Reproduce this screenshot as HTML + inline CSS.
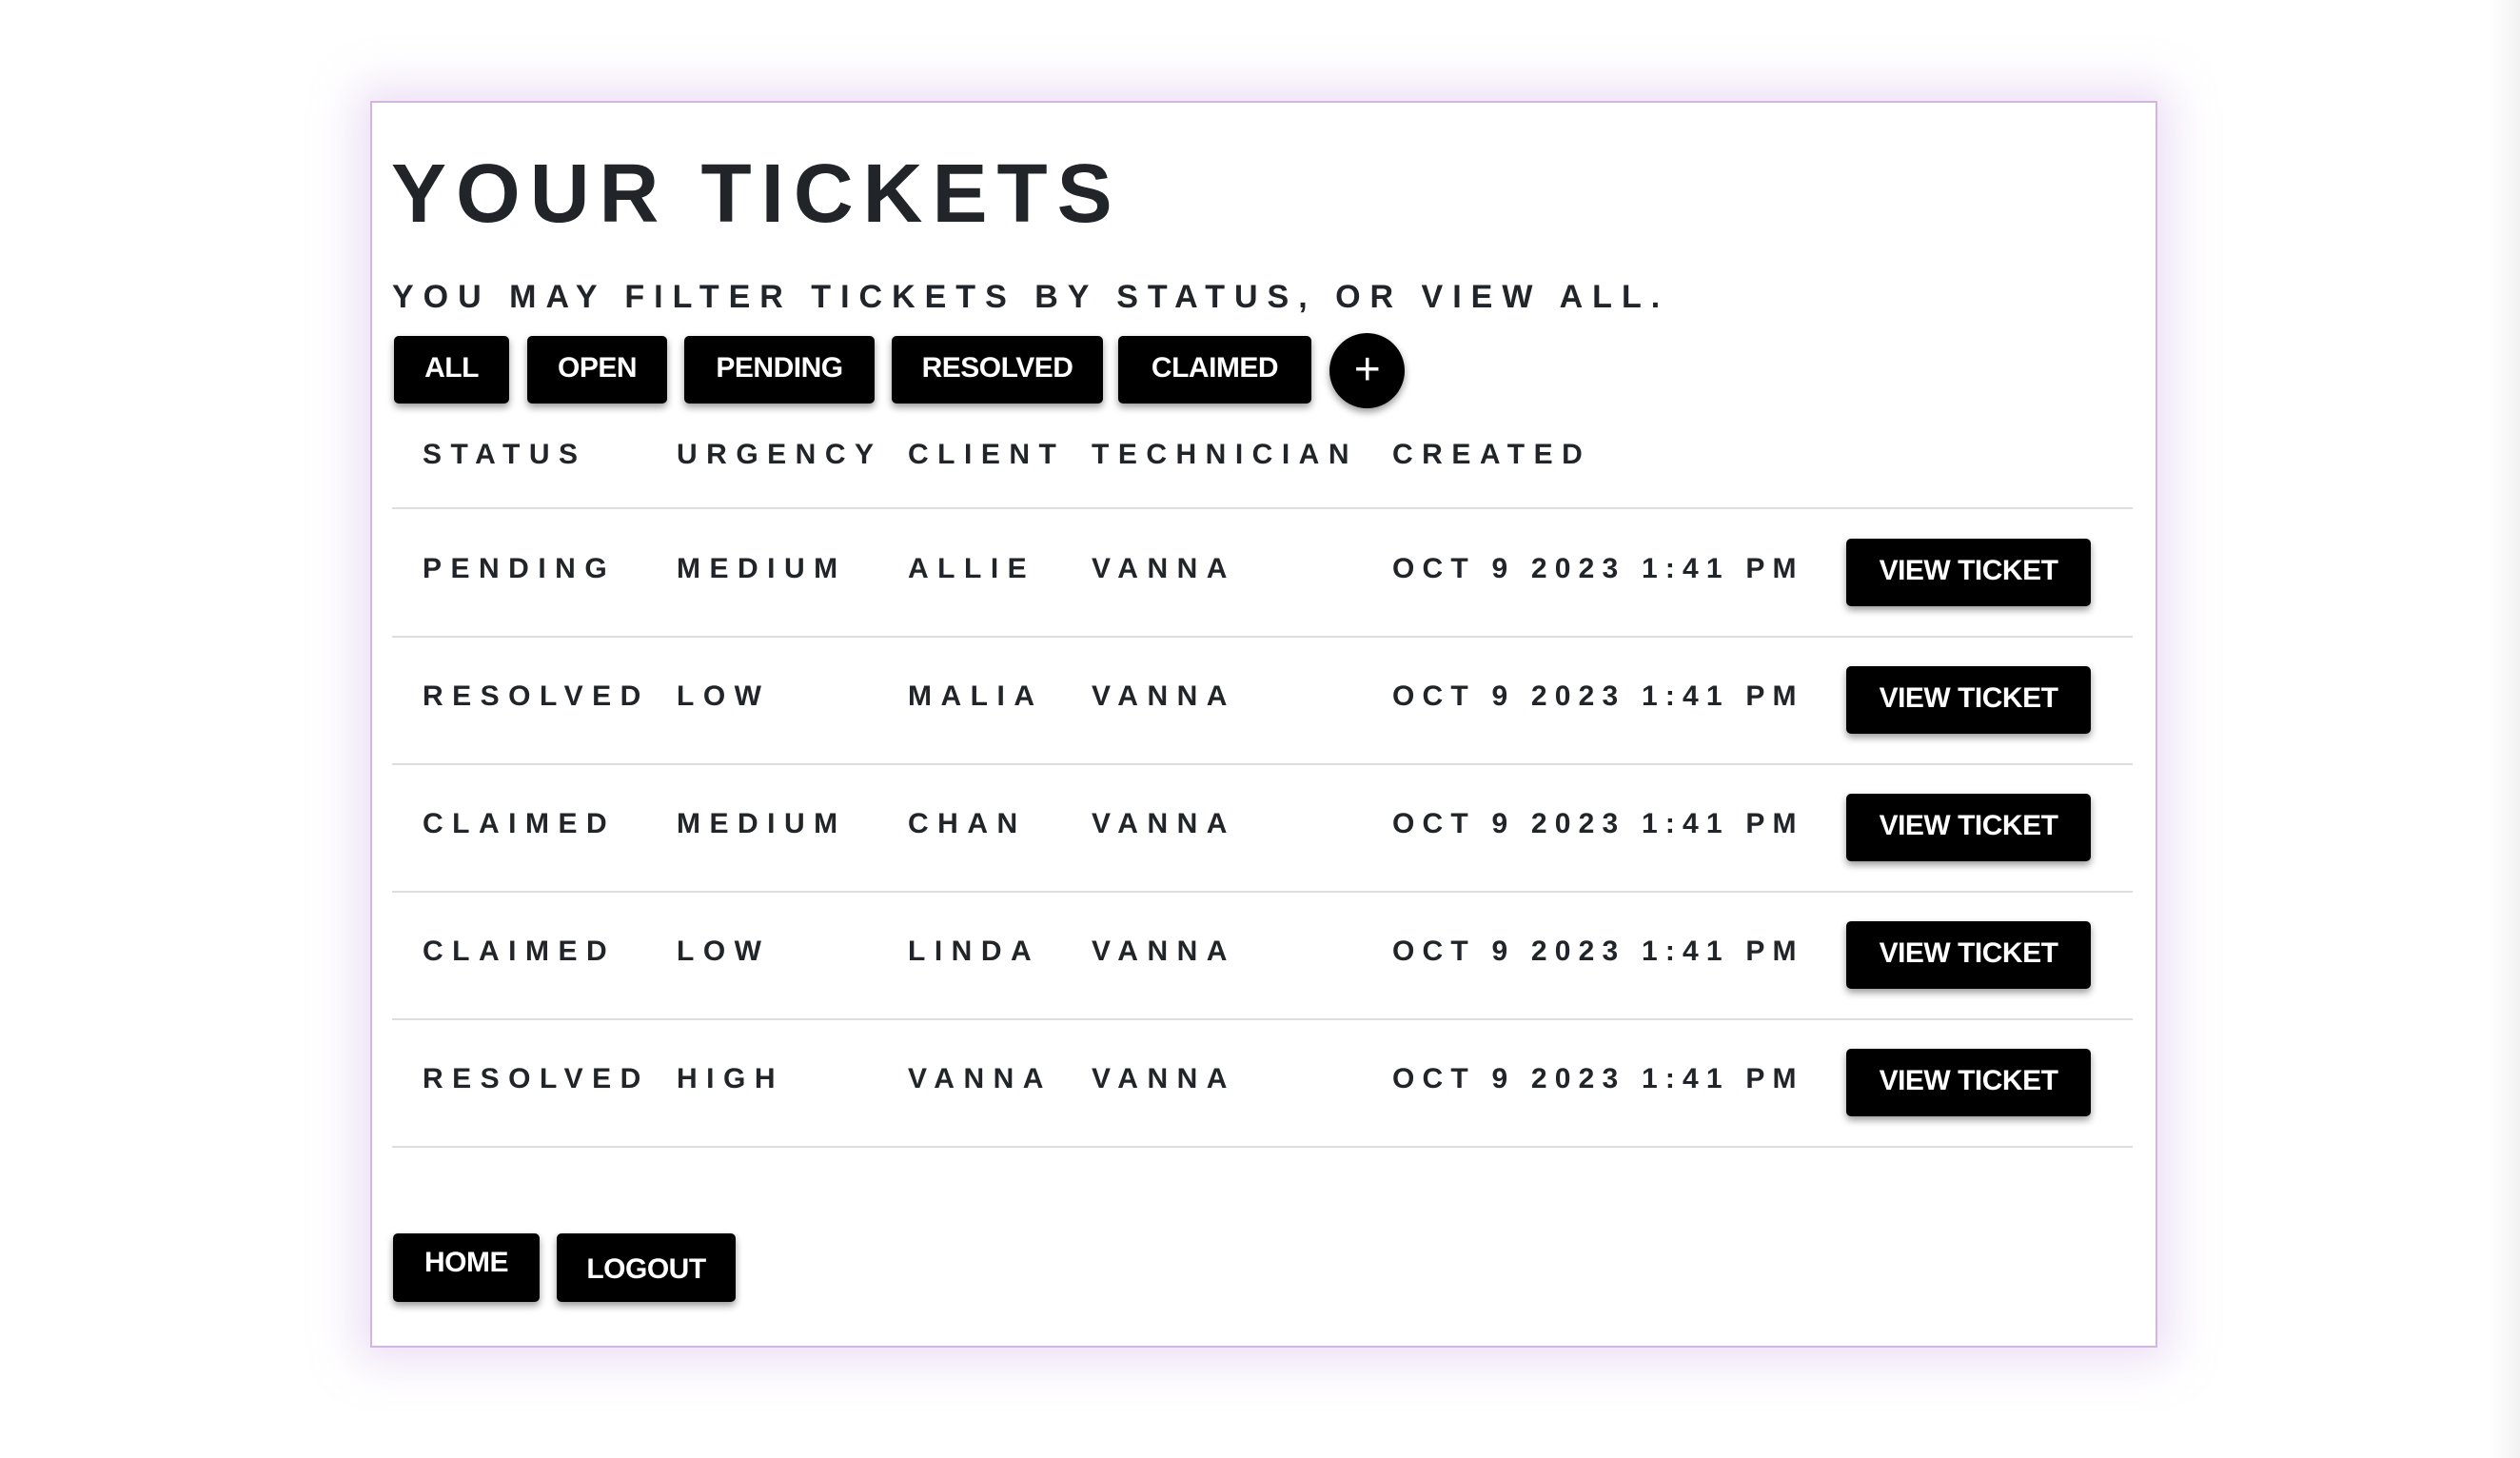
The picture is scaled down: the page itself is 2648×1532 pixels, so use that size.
<!DOCTYPE html>
<html><head><meta charset="utf-8"><style>
html,body{margin:0;padding:0;}
body{width:2648px;height:1532px;background:#fff;position:relative;overflow:hidden;font-family:"Liberation Sans",sans-serif;font-weight:bold;color:#212529;}
.edge{position:absolute;right:0;top:0;width:34px;height:1532px;background:linear-gradient(to right,rgba(0,0,0,0),rgba(0,0,0,0.05));}
.card{position:absolute;left:389px;top:106px;width:1874px;height:1306px;border:2px solid #d3b6df;box-shadow:0 0 45px 14px rgba(200,160,225,0.35);background:#fff;}
.t{position:absolute;white-space:nowrap;line-height:1;}
h1{position:absolute;left:411px;top:160px;margin:0;font-size:87px;letter-spacing:10px;line-height:1;}
.sub{left:412px;top:295px;font-size:34px;letter-spacing:10px;}
.btn{position:absolute;background:#000;color:#fff;border-radius:5px;box-shadow:0 4px 8px rgba(0,0,0,0.4);display:flex;align-items:center;justify-content:center;font-size:30px;letter-spacing:-0.5px;padding-bottom:4px;box-sizing:border-box;}
.col{font-size:30px;letter-spacing:9.5px;}
.d{letter-spacing:8.2px;}
.line{position:absolute;left:412px;width:1829px;height:2px;background:#dedede;}
</style></head><body>
<div class="edge"></div>
<div class="card"></div>
<h1>YOUR TICKETS</h1>
<div class="t sub">YOU MAY FILTER TICKETS BY STATUS, OR VIEW ALL.</div>

<div class="btn" style="left:414px;top:353px;width:121px;height:71px;">ALL</div>
<div class="btn" style="left:554px;top:353px;width:147px;height:71px;">OPEN</div>
<div class="btn" style="left:719px;top:353px;width:200px;height:71px;">PENDING</div>
<div class="btn" style="left:937px;top:353px;width:222px;height:71px;">RESOLVED</div>
<div class="btn" style="left:1175px;top:353px;width:203px;height:71px;">CLAIMED</div>
<div class="btn" style="left:1397px;top:350px;width:79px;height:79px;border-radius:50%;font-size:48px;font-weight:normal;padding-bottom:2px;">+</div>

<div class="t col" style="left:444px;top:463px;">STATUS</div>
<div class="t col" style="left:711px;top:463px;">URGENCY</div>
<div class="t col" style="left:954px;top:463px;">CLIENT</div>
<div class="t col" style="left:1147px;top:463px;">TECHNICIAN</div>
<div class="t col" style="left:1463px;top:463px;">CREATED</div>
<div class="line" style="top:533px;"></div>

<div class="t col" style="left:444px;top:583px;">PENDING</div>
<div class="t col" style="left:711px;top:583px;">MEDIUM</div>
<div class="t col" style="left:954px;top:583px;">ALLIE</div>
<div class="t col" style="left:1147px;top:583px;">VANNA</div>
<div class="t col d" style="left:1463px;top:583px;">OCT 9 2023 1:41 PM</div>
<div class="btn" style="left:1940px;top:566px;width:257px;height:71px;">VIEW TICKET</div>
<div class="line" style="top:668px;"></div>

<div class="t col" style="left:444px;top:717px;">RESOLVED</div>
<div class="t col" style="left:711px;top:717px;">LOW</div>
<div class="t col" style="left:954px;top:717px;">MALIA</div>
<div class="t col" style="left:1147px;top:717px;">VANNA</div>
<div class="t col d" style="left:1463px;top:717px;">OCT 9 2023 1:41 PM</div>
<div class="btn" style="left:1940px;top:700px;width:257px;height:71px;">VIEW TICKET</div>
<div class="line" style="top:802px;"></div>

<div class="t col" style="left:444px;top:851px;">CLAIMED</div>
<div class="t col" style="left:711px;top:851px;">MEDIUM</div>
<div class="t col" style="left:954px;top:851px;">CHAN</div>
<div class="t col" style="left:1147px;top:851px;">VANNA</div>
<div class="t col d" style="left:1463px;top:851px;">OCT 9 2023 1:41 PM</div>
<div class="btn" style="left:1940px;top:834px;width:257px;height:71px;">VIEW TICKET</div>
<div class="line" style="top:936px;"></div>

<div class="t col" style="left:444px;top:985px;">CLAIMED</div>
<div class="t col" style="left:711px;top:985px;">LOW</div>
<div class="t col" style="left:954px;top:985px;">LINDA</div>
<div class="t col" style="left:1147px;top:985px;">VANNA</div>
<div class="t col d" style="left:1463px;top:985px;">OCT 9 2023 1:41 PM</div>
<div class="btn" style="left:1940px;top:968px;width:257px;height:71px;">VIEW TICKET</div>
<div class="line" style="top:1070px;"></div>

<div class="t col" style="left:444px;top:1119px;">RESOLVED</div>
<div class="t col" style="left:711px;top:1119px;">HIGH</div>
<div class="t col" style="left:954px;top:1119px;">VANNA</div>
<div class="t col" style="left:1147px;top:1119px;">VANNA</div>
<div class="t col d" style="left:1463px;top:1119px;">OCT 9 2023 1:41 PM</div>
<div class="btn" style="left:1940px;top:1102px;width:257px;height:71px;">VIEW TICKET</div>
<div class="line" style="top:1204px;"></div>

<div class="btn" style="left:413px;top:1296px;width:154px;height:72px;padding-bottom:10px;">HOME</div>
<div class="btn" style="left:585px;top:1296px;width:188px;height:72px;padding-top:4px;padding-bottom:0;">LOGOUT</div>
</body></html>
